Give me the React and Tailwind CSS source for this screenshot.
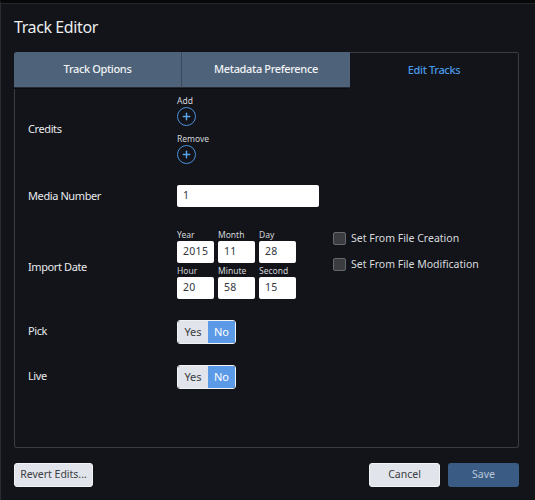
import {Plus} from "lucide-react";

const font = {fontFamily: '"Noto Sans", sans-serif'}

const Tab = ({label, active, className}) => (
    <div
        className={`flex items-center justify-center h-[36px] text-[11px] tracking-[-0.35px] font-medium ${active ? "text-[#4a9aea]" : "bg-[#4e6379] text-[#f0f2f5] border-b border-b-[#262a30] shadow-[0_1px_0_#0b0c0e]"} ${className}`}>
        {label}
    </div>
)

const AddButton = ({label, className}) => (
    <div className={`flex flex-col items-start ${className}`}>
        <span className="text-[8.5px] leading-[13px] text-[#d4d6da]">{label}</span>
        <button className="w-[19px] h-[19px] rounded-full border border-[#4a90d9] flex items-center justify-center">
            <Plus size={11} strokeWidth={3} className="text-[#5aa5ee]"/>
        </button>
    </div>
)

const TimeField = ({label, value}) => (
    <div className="flex flex-col w-[37px]">
        <span className="text-[8.5px] leading-[12px] h-[12px] text-[#d4d6da]">{label}</span>
        <div
            className="h-[22px] bg-white rounded-[2px] pl-[6px] flex items-center text-[10.5px] tracking-[0.3px] text-[#33363b]">
            {value}
        </div>
    </div>
)

const Check = ({label, className}) => (
    <div className={`flex items-center h-[13px] ${className}`}>
        <span className="w-[13px] h-[13px] rounded-[2px] bg-[#3a3c40] border border-[#65686c]"/>
        <span className="ml-[5px] text-[10.5px] leading-[13px] text-[#d9dbde]">{label}</span>
    </div>
)

const Toggle = () => (
    <div className="flex w-[59px] h-[24px] rounded-[3px] overflow-hidden border border-[#f2f3f5] text-[11px]">
        <span className="w-[30px] flex items-center justify-center bg-[#e1e4ea] text-[#3b3e43]">Yes</span>
        <span className="flex-1 flex items-center justify-center bg-[#5a9ae6] text-white">No</span>
    </div>
)

const Label = ({children, className}) => (
    <div className={`w-[162px] pl-[13px] text-[11px] leading-[14px] tracking-[-0.4px] text-[#e8eaed] shrink-0 ${className}`}>{children}</div>
)

export default function App() {
    return (
        <div style={font} className="w-[535px] h-[500px] bg-[#121419] border-l border-l-[#2a2c30] border-t-[3px] border-t-[#07080a] overflow-hidden">
            <div className="h-[1px] bg-[#24262a]"/>
            <h1 className="ml-[13px] mt-[12px] h-[22px] leading-[22px] text-[16px] tracking-[-0.4px] text-[#eceef0]">Track Editor</h1>
            <div className="ml-[13px] mt-[14px] w-[505px] h-[396px] border border-[#3a3d42] border-t-0 rounded-[3px] flex flex-col">
                <div className="flex -ml-px">
                    <Tab label="Track Options" className="w-[168px] rounded-tl-[3px] border-r border-r-[#3b4a5b]"/>
                    <Tab label="Metadata Preference" className="w-[168px]"/>
                    <Tab label="Edit Tracks" active className="flex-1 border-t border-t-[#3a3d42]"/>
                </div>

                <div className="flex items-center mt-[6px]">
                    <Label>Credits</Label>
                    <div className="flex flex-col">
                        <AddButton label="Add"/>
                        <AddButton label="Remove" className="mt-[6px]"/>
                    </div>
                </div>

                <div className="flex items-center mt-[21px]">
                    <Label>Media Number</Label>
                    <div
                        className="w-[142px] h-[22px] bg-white rounded-[2px] pl-[6px] flex items-center text-[10.5px] text-[#33363b]">1
                    </div>
                </div>

                <div className="flex items-center mt-[22px]">
                    <Label className="pt-[5px]">Import Date</Label>
                    <div className="flex flex-col gap-[2px] w-[156px]">
                        <div className="flex gap-[4px]">
                            <TimeField label="Year" value="2015"/>
                            <TimeField label="Month" value="11"/>
                            <TimeField label="Day" value="28"/>
                        </div>
                        <div className="flex gap-[4px]">
                            <TimeField label="Hour" value="20"/>
                            <TimeField label="Minute" value="58"/>
                            <TimeField label="Second" value="15"/>
                        </div>
                    </div>
                    <div className="flex flex-col gap-[13px] self-start mt-[3px]">
                        <Check label="Set From File Creation"/>
                        <Check label="Set From File Modification"/>
                    </div>
                </div>

                <div className="flex items-center mt-[21px]">
                    <Label className="pb-[2px]">Pick</Label>
                    <Toggle/>
                </div>
                <div className="flex items-center mt-[21px]">
                    <Label className="pb-[2px]">Live</Label>
                    <Toggle/>
                </div>
            </div>

            <div className="flex items-center ml-[13px] mt-[15px] w-[505px] text-[10.5px]">
                <button className="w-[79px] h-[24px] rounded-[3px] bg-[#e1e4ea] border border-[#f2f3f5] text-[#3b3e43]">Revert Edits...</button>
                <button className="ml-auto w-[71px] h-[24px] rounded-[3px] bg-[#e1e4ea] border border-[#f2f3f5] text-[#3b3e43]">Cancel</button>
                <button className="ml-[8px] w-[71px] h-[24px] rounded-[3px] bg-[#3a5c84] text-[#b9c6d6]">Save</button>
            </div>
        </div>
    )
}
